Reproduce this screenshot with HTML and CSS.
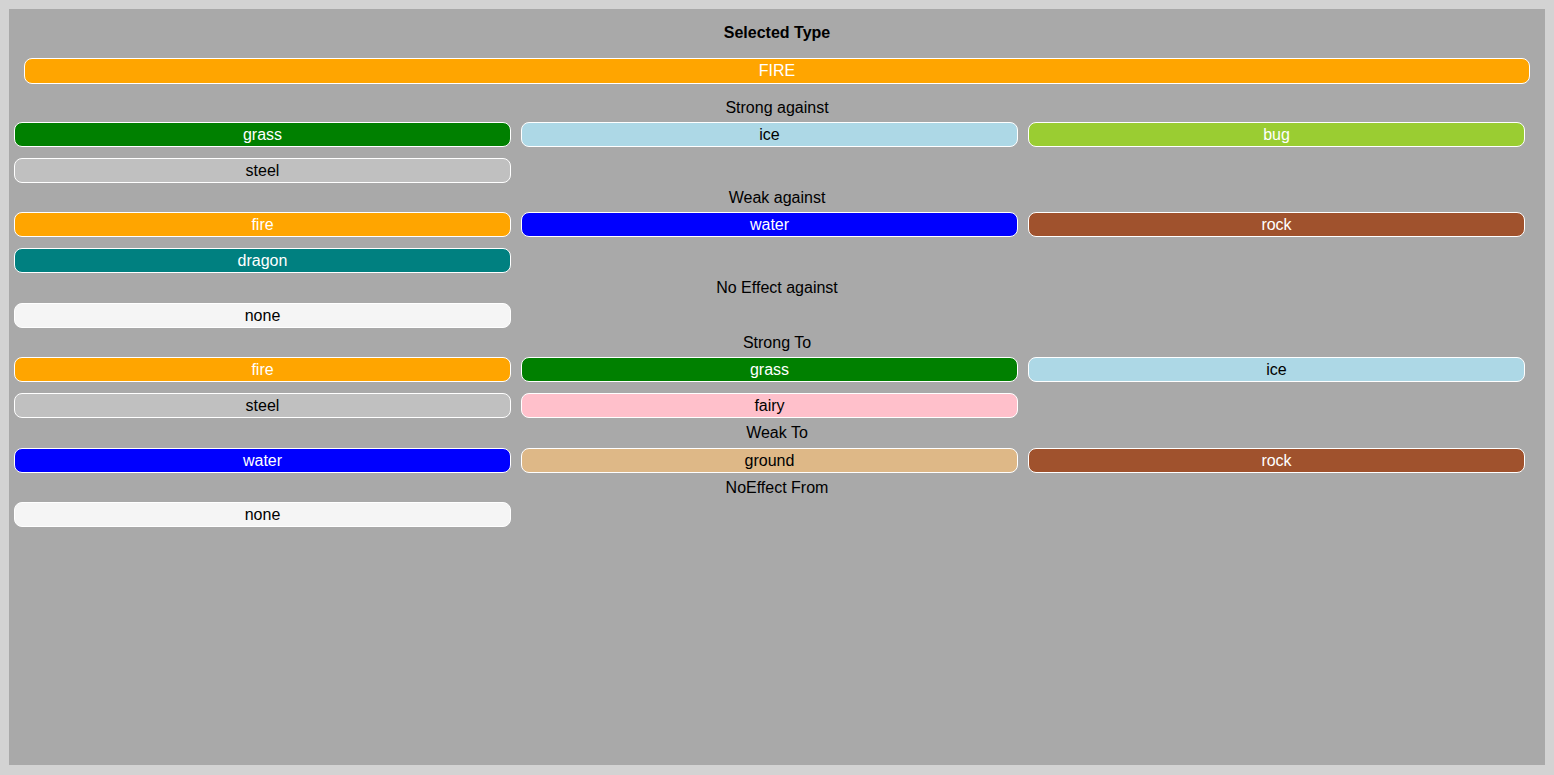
FILE: index.html
```html
<!DOCTYPE html>
<html>
<head>
<meta charset="utf-8">
<title>Type Chart</title>
<link rel="stylesheet" href="styles.css">
</head>
<body>
<div class="panel">
  <div class="title">Selected Type</div>
  <div class="type selected t-fire">FIRE</div>

  <div class="label">Strong against</div>
  <div class="grid">
    <div class="type t-grass">grass</div>
    <div class="type t-ice">ice</div>
    <div class="type t-bug">bug</div>
    <div class="type t-steel">steel</div>
  </div>

  <div class="label">Weak against</div>
  <div class="grid">
    <div class="type t-fire">fire</div>
    <div class="type t-water">water</div>
    <div class="type t-rock">rock</div>
    <div class="type t-dragon">dragon</div>
  </div>

  <div class="label">No Effect against</div>
  <div class="grid">
    <div class="type t-none">none</div>
  </div>

  <div class="label">Strong To</div>
  <div class="grid">
    <div class="type t-fire">fire</div>
    <div class="type t-grass">grass</div>
    <div class="type t-ice">ice</div>
    <div class="type t-steel">steel</div>
    <div class="type t-fairy">fairy</div>
  </div>

  <div class="label">Weak To</div>
  <div class="grid">
    <div class="type t-water">water</div>
    <div class="type t-ground">ground</div>
    <div class="type t-rock">rock</div>
  </div>

  <div class="label">NoEffect From</div>
  <div class="grid">
    <div class="type t-none">none</div>
  </div>
</div>
</body>
</html>
```
FILE: styles.css
```css
html {
  background: #d3d3d3;
}
body {
  margin: 0;
  padding: 9px;
  font-family: "Liberation Sans", Arial, sans-serif;
  font-size: 16px;
  color: #000;
}
.panel {
  background: #a9a9a9;
  height: 756px;
  box-sizing: border-box;
  padding-top: 13.5px;
}
.title {
  text-align: center;
  font-weight: bold;
  line-height: 19px;
}
.label {
  text-align: center;
  line-height: 19.4px;
  margin: 5px 0;
}
.grid {
  display: grid;
  grid-template-columns: repeat(3, 1fr);
  column-gap: 10px;
  row-gap: 11px;
  padding: 0 20px 0 5px;
}
.type {
  box-sizing: border-box;
  height: 25px;
  line-height: 23px;
  border: 1px solid #fff;
  border-radius: 8px;
  text-align: center;
  color: #fff;
}
.type.selected {
  height: 26px;
  line-height: 24px;
  margin: 16.5px 15px 13.5px;
}
.t-fire { background: #ffa500; }
.t-grass { background: #008000; }
.t-ice { background: #add8e6; color: #000; }
.t-bug { background: #9acd32; }
.t-steel { background: #c0c0c0; color: #000; }
.t-water { background: #0000ff; }
.t-rock { background: #a0522d; }
.t-dragon { background: #008080; }
.t-none { background: #f5f5f5; color: #000; }
.t-fairy { background: #ffc0cb; color: #000; }
.t-ground { background: #deb887; color: #000; }
```
